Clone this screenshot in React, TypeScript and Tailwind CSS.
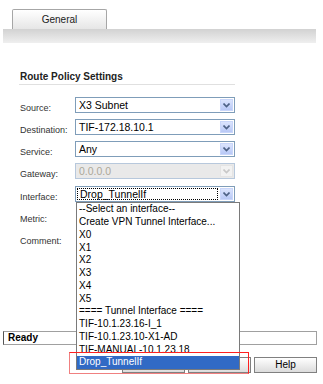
const font = { fontFamily: '"Liberation Sans", Arial, sans-serif' };

function Chevron({ disabled = false }: { disabled?: boolean }) {
  return (
    <svg width="7" height="5" viewBox="0 0 7 5" className="block">
      <path
        d="M0.5 0.5 L3.5 3.5 L6.5 0.5"
        fill="none"
        stroke={disabled ? "#c8c8c8" : "#4d6185"}
        strokeWidth="1.6"
      />
    </svg>
  );
}

function Select({
  value,
  disabled = false,
  focused = false,
}: {
  value: string;
  disabled?: boolean;
  focused?: boolean;
}) {
  return (
    <div
      className={`flex h-[16px] w-[160px] items-stretch border ${
        disabled ? "border-[#b7c8dc] bg-[#e9e9e9]" : "border-[#7f9db9] bg-white"
      }`}
    >
      <div className="flex flex-1 items-center p-px">
        <div
          className={`flex h-full flex-1 items-center pl-[2px] text-[10.5px] leading-none ${
            disabled ? "text-[#aca899]" : "text-black"
          } ${focused ? "border border-dotted border-black" : ""}`}
        >
          {value}
        </div>
      </div>
      <div className="flex items-center p-px">
        <div
          className={`flex h-[12px] w-[13px] items-center justify-center border ${
            disabled
              ? "border-[#e4e4e4] bg-[#f2f2f2]"
              : "border-[#c9d6fa] bg-gradient-to-b from-[#dbe4fd] to-[#b8c8f6]"
          }`}
        >
          <Chevron disabled={disabled} />
        </div>
      </div>
    </div>
  );
}

function Row({ label, children }: { label: string; children?: React.ReactNode }) {
  return (
    <div className="flex h-[16px] items-start">
      <div className="w-[55px] pt-[7px] text-[9px] leading-none text-[#333]">{label}</div>
      {children}
    </div>
  );
}

const items = [
  "--Select an interface--",
  "Create VPN Tunnel Interface...",
  "X0",
  "X1",
  "X2",
  "X3",
  "X4",
  "X5",
  "==== Tunnel Interface ====",
  "TIF-10.1.23.16-I_1",
  "TIF-10.1.23.10-X1-AD",
  "TIF-MANUAL-10.1.23.18",
  "Drop_TunnelIf",
];

export default function App() {
  return (
    <div className="relative h-[384px] w-[323px] overflow-hidden bg-white" style={font}>
      {/* tab */}
      <div className="pl-[12px] pt-[9px]">
        <div className="flex h-[20px] w-[95px] items-center justify-center rounded-t-[2px] border border-b-0 border-[#a6a6a6] bg-gradient-to-b from-white to-[#e6e6e6] text-[10px] text-[#222]">
          General
        </div>
      </div>
      <div className="ml-[3px] h-[14px] w-[313px] bg-gradient-to-b from-[#d2d2d2] to-[#efefef]" />

      {/* heading */}
      <div className="ml-[19px] mt-[28px] w-[216px] border-b border-[#e0e0e0] pb-[1px] pl-px text-[10px] font-bold leading-[12px] text-[#222]">
        Route Policy Settings
      </div>

      {/* form */}
      <div className="ml-[20px] mt-[12px] flex flex-col gap-[6px]">
        <Row label="Source:">
          <Select value="X3 Subnet" />
        </Row>
        <Row label="Destination:">
          <Select value="TIF-172.18.10.1" />
        </Row>
        <Row label="Service:">
          <Select value="Any" />
        </Row>
        <Row label="Gateway:">
          <Select value="0.0.0.0" disabled />
        </Row>
        <div className="mt-px">
          <Row label="Interface:">
            <Select value="Drop_TunnelIf" focused />
          </Row>
        </div>
        <Row label="Metric:" />
        <Row label="Comment:" />
      </div>

      {/* status */}
      <div className="ml-[3px] mt-[85px] flex h-[14px] w-[314px] items-center border border-[#a0a0a0] border-l-[#555] pl-[4px] text-[10px] font-bold leading-none text-black">
        Ready
      </div>

      {/* buttons */}
      <div className="mt-[12px] flex justify-end gap-[3px] pr-[6px]">
        {["OK", "Cancel", "Help"].map((b) => (
          <div
            key={b}
            className="flex h-[16px] w-[63px] items-center justify-center border border-[#808080] bg-gradient-to-b from-white to-[#dcdcdc] text-[10px] leading-none text-black"
          >
            {b}
          </div>
        ))}
      </div>

      {/* open dropdown list */}
      <div className="absolute left-[76px] top-[202px] w-[164px] border border-[#7a7a7a] bg-white">
        {items.map((it, i) => (
          <div
            key={it}
            className={`flex h-[12.75px] items-center whitespace-nowrap pl-[2px] text-[10px] leading-none ${
              i === items.length - 1 ? "bg-[#316ac5] text-white" : "text-black"
            }`}
          >
            {it}
          </div>
        ))}
      </div>

      {/* red annotation */}
      <div className="absolute left-[69px] top-[352px] h-[22px] w-[180px] border border-[#ff2020] border-b-[#f08080] border-l-[#f08080]" />
    </div>
  );
}
